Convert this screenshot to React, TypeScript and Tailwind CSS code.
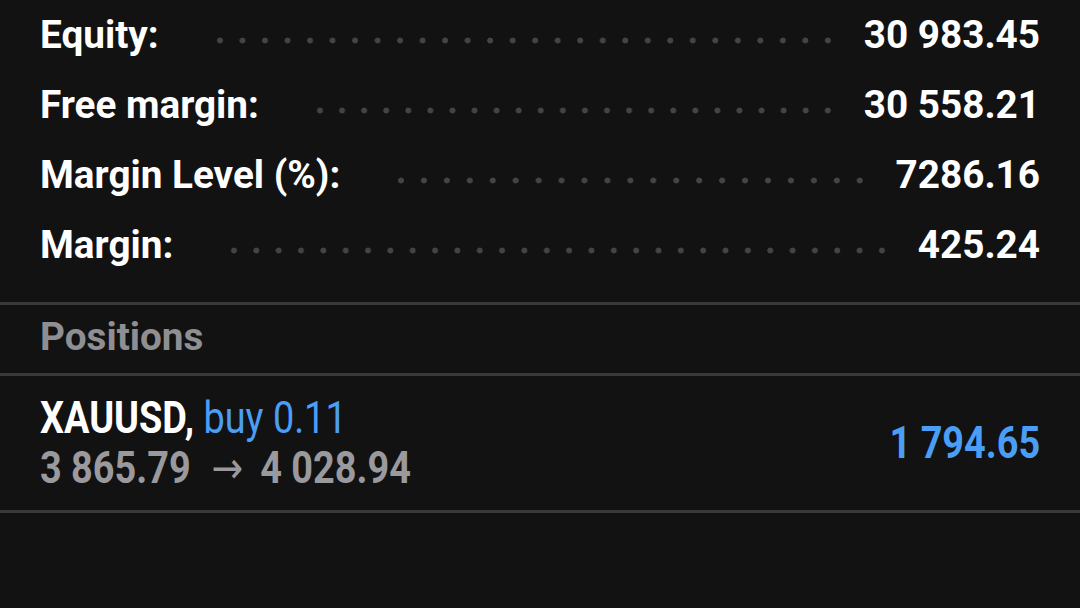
import React from "react";

const rows = [
  { label: "Equity:", value: "30 983.45" },
  { label: "Free margin:", value: "30 558.21" },
  { label: "Margin Level (%):", value: "7286.16" },
  { label: "Margin:", value: "425.24" },
];

export default function App() {
  return (
    <div
      className="w-[1080px] h-[608px] overflow-hidden bg-[#121212] text-white"
      style={{ fontFamily: "Roboto, 'Noto Sans', sans-serif" }}
    >
      <div className="px-[40px]">
        {rows.map((r) => (
          <div key={r.label} className="flex h-[70px] items-stretch">
            <div className="text-[38.7px] leading-[70px] font-bold whitespace-nowrap">{r.label}</div>
            <div className="flex-1 ml-[50px] mr-[25px] bg-[radial-gradient(circle_at_50%_40.5px,#444444_2.6px,transparent_3.3px)] bg-[length:22px_70px] bg-repeat-space" />
            <div className="text-[38.7px] leading-[70px] font-bold whitespace-nowrap">{r.value}</div>
          </div>
        ))}
      </div>
      <div className="mt-[22px] border-t-[3px] border-[#393939]">
        <div className="px-[40px] h-[68px] text-[38.7px] leading-[64px] font-bold text-[#8f8f93]">Positions</div>
      </div>
      <div className="border-t-[3px] border-b-[3px] border-[#393939]">
        <div className="px-[40px] h-[134px] flex items-center justify-between">
          <div className="flex flex-col text-[44px] leading-[49px]">
            <div className="inline-block origin-left scale-x-[0.86] whitespace-nowrap">
              <span className="font-bold text-white">XAUUSD,</span>{" "}
              <span className="font-normal text-[#4b9ef5]">buy 0.11</span>
            </div>
            <div className="inline-block origin-left scale-x-[0.86] whitespace-nowrap font-bold text-[#9a9a9e]">
              3 865.79
              <span
                className="inline-block font-normal ml-[24px] mr-[20px]"
                style={{ fontFamily: "'DejaVu Sans', sans-serif" }}
              >
                →
              </span>
              4 028.94
            </div>
          </div>
          <div className="text-[44px] leading-[49px] font-bold text-[#4b9ef5] origin-right scale-x-[0.86] whitespace-nowrap">
            1 794.65
          </div>
        </div>
      </div>
    </div>
  );
}
